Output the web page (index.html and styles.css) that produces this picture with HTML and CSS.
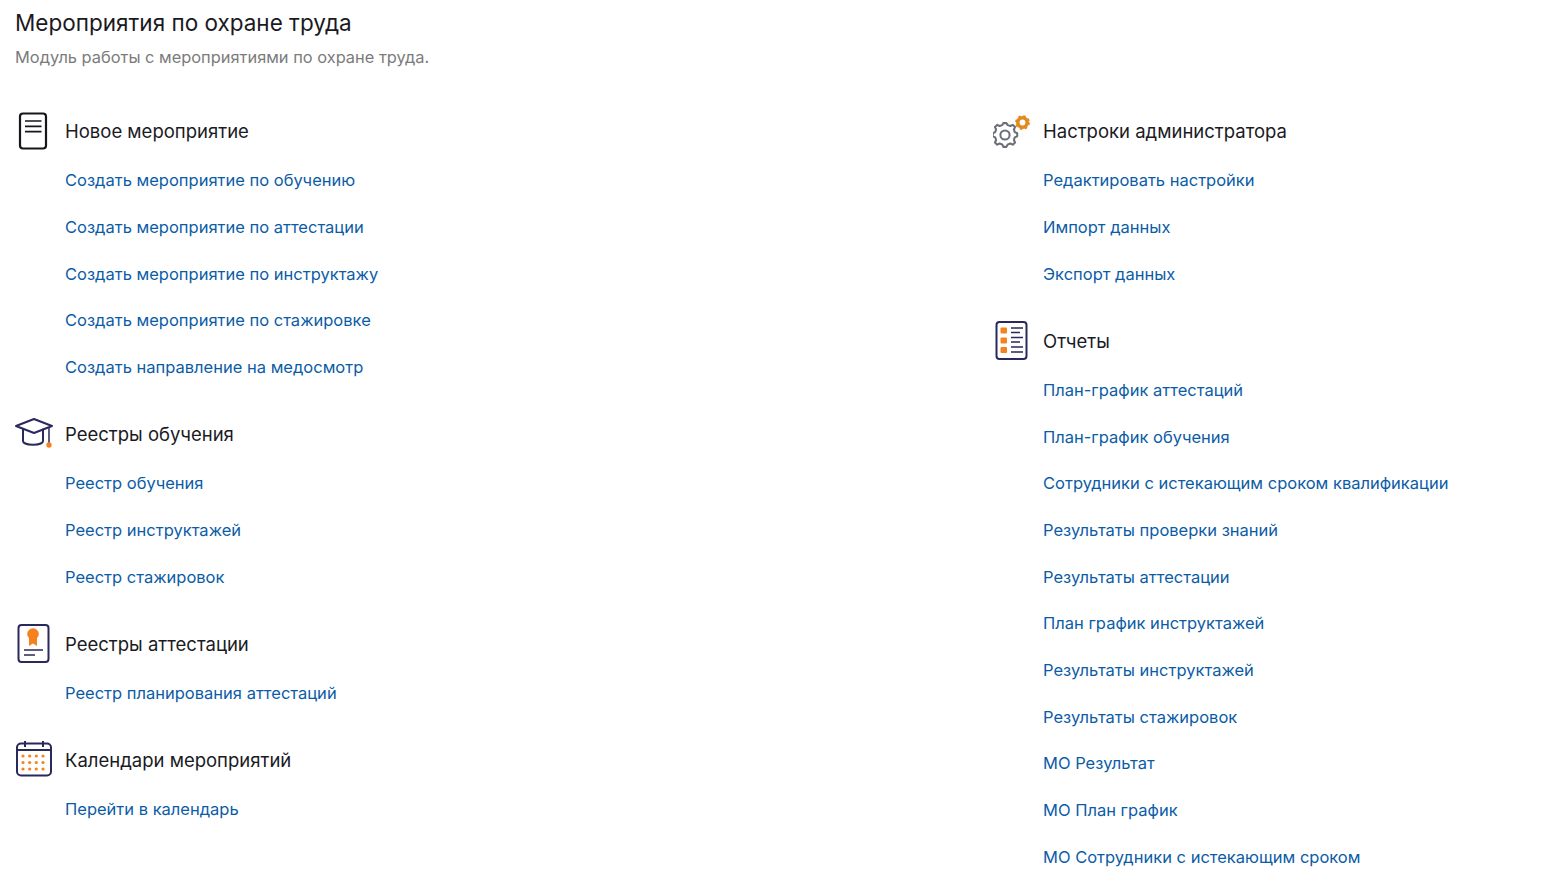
FILE: index.html
```html
<!DOCTYPE html>
<html>
  <head>
    <title>Мероприятия по охране труда</title>

    <link rel="stylesheet" href="styles.css">
  </head>
  <body>
    <h1>Мероприятия по охране труда</h1>
    <p class="subtitle">Модуль работы с мероприятиями по охране труда.</p>

    <div class="columns">
      <div>
        <section class="group">
          <div class="group-head">
            <svg class="icon" viewBox="0 0 40 40" fill="none" stroke="#16161d" stroke-width="2.200">
              <rect x="5" y="2.500" width="26" height="35" rx="3"/>
              <path d="M10 10H26.500M10 15.300H26.500M10 20.600H26.500" stroke-width="1.700"/>
            </svg>
            <h2>Новое мероприятие</h2>
          </div>
          <a href="#">Создать мероприятие по обучению</a>
          <a href="#">Создать мероприятие по аттестации</a>
          <a href="#">Создать мероприятие по инструктажу</a>
          <a href="#">Создать мероприятие по стажировке</a>
          <a href="#">Создать направление на медосмотр</a>
        </section>

        <section class="group">
          <div class="group-head">
            <svg class="icon" viewBox="0 0 40 40" fill="none" stroke="#29295c" stroke-width="2">
              <path d="M1 12L19 5L37 12L19 19Z" stroke-linejoin="round"/>
              <path d="M8 15.500V27C8 32 28 32 28 27V15.500" stroke-linecap="round"/>
              <path d="M34 13V29" stroke-width="1.500"/>
              <circle cx="34" cy="31" r="2.700" fill="#f5821f" stroke="none"/>
            </svg>
            <h2>Реестры обучения</h2>
          </div>
          <a href="#">Реестр обучения</a>
          <a href="#">Реестр инструктажей</a>
          <a href="#">Реестр стажировок</a>
        </section>

        <section class="group">
          <div class="group-head">
            <svg class="icon" viewBox="0 0 40 40" fill="none" stroke="#29295c" stroke-width="2">
              <rect x="3.500" y="1" width="30" height="37" rx="3"/>
              <path d="M14 13V22L18 19.500L22 22V13Z" fill="#f5821f" stroke="none"/>
              <circle cx="18" cy="10" r="5.800" fill="#f5821f" stroke="none"/>
              <path d="M9 26H28M9 31H20" stroke-width="1.700"/>
            </svg>
            <h2>Реестры аттестации</h2>
          </div>
          <a href="#">Реестр планирования аттестаций</a>
        </section>

        <section class="group">
          <div class="group-head">
            <svg class="icon" viewBox="0 0 40 40" fill="none" stroke="#29295c" stroke-width="2">
              <rect x="2" y="3.500" width="34" height="32" rx="4"/>
              <path d="M2 10H36M10 1V7M28 1V7"/>
              <g fill="#f5821f" stroke="none">
                <circle cx="8" cy="16" r="1.600"/><circle cx="14.700" cy="16" r="1.600"/><circle cx="21.300" cy="16" r="1.600"/><circle cx="28" cy="16" r="1.600"/>
                <circle cx="8" cy="22.500" r="1.600"/><circle cx="14.700" cy="22.500" r="1.600"/><circle cx="21.300" cy="22.500" r="1.600"/><circle cx="28" cy="22.500" r="1.600"/>
                <circle cx="8" cy="29" r="1.600"/><circle cx="14.700" cy="29" r="1.600"/><circle cx="21.300" cy="29" r="1.600"/><circle cx="28" cy="29" r="1.600"/>
              </g>
            </svg>
            <h2>Календари мероприятий</h2>
          </div>
          <a href="#">Перейти в календарь</a>
        </section>
      </div>

      <div>
        <section class="group">
          <div class="group-head">
            <svg class="icon" viewBox="0 0 40 40" fill="none">
              <path d="M12 13L15.500 13L17 15.300L20 16.300L22.800 15L25.300 17.500L24 20.300L25 23.300L27.800 24.500V28L25 29.200L24 32.200L25.300 35L22.800 37.500L20 36.200L17 37.200L15.500 40H12L10.800 37.200L7.800 36.200L5 37.500L2.500 35L3.800 32.200L2.800 29.200L0 28V24.500L2.800 23.300L3.800 20.300L2.500 17.500L5 15L7.800 16.300L10.800 15.300Z" transform="translate(12 24) scale(.88) translate(-13.900 -26.500)" stroke="#6b6e76" stroke-width="2.300" stroke-linejoin="round"/>
              <circle cx="12" cy="24" r="4.600" stroke="#6b6e76" stroke-width="2"/>
              <circle cx="29.500" cy="11.500" r="4.700" stroke="#e38a1f" stroke-width="3.600"/>
              <circle cx="29.500" cy="11.500" r="6.500" stroke="#e38a1f" stroke-width="1.800" stroke-dasharray="2.500 2.600"/>
            </svg>
            <h2>Настроки администратора</h2>
          </div>
          <a href="#">Редактировать настройки</a>
          <a href="#">Импорт данных</a>
          <a href="#">Экспорт данных</a>
        </section>

        <section class="group">
          <div class="group-head">
            <svg class="icon" viewBox="0 0 40 40" fill="none" stroke="#29295c" stroke-width="2">
              <rect x="3.500" y="1" width="30" height="37" rx="3"/>
              <g fill="#f5821f" stroke="none">
                <rect x="7.500" y="6.500" width="6.500" height="6" rx="1"/>
                <rect x="7.500" y="16.500" width="6.500" height="6" rx="1"/>
                <rect x="7.500" y="26" width="6.500" height="6" rx="1"/>
              </g>
              <path d="M18 7H30M18 11.500H27M18 16.500H30M18 21H27M18 26H30M18 31H30" stroke-width="1.600"/>
            </svg>
            <h2>Отчеты</h2>
          </div>
          <a href="#">План-график аттестаций</a>
          <a href="#">План-график обучения</a>
          <a href="#">Сотрудники с истекающим сроком квалификации</a>
          <a href="#">Результаты проверки знаний</a>
          <a href="#">Результаты аттестации</a>
          <a href="#">План график инструктажей</a>
          <a href="#">Результаты инструктажей</a>
          <a href="#">Результаты стажировок</a>
          <a href="#">МО Результат</a>
          <a href="#">МО План график</a>
          <a href="#">МО Сотрудники с истекающим сроком</a>
        </section>
      </div>
    </div>
  </body>
</html>
```

FILE: styles.css
```css
body,
h1,
h2,
p {
  margin: 0;
  padding: 0;
}

/* Body styling */
body {
  background: #fff;
  color: #1a1a1f;
  padding: 0 15px;
  font-family: "Inter", sans-serif;
  height: 888px;
  box-sizing: border-box;
  overflow: hidden;
}

/* Page header */
h1 {
  font-size: 22.500px;
  font-weight: 400;
  line-height: 32px;
  padding-top: 7px;
}

.subtitle {
  font-size: 16.400px;
  line-height: 22px;
  color: #7b7b7b;
  margin-top: 7px;
}

/* Two columns of link groups */
.columns {
  display: grid;
  grid-template-columns: 978px 1fr;
  margin-top: 43px;
}

.group {
  margin-bottom: 23.500px;
}

.group-head {
  display: flex;
  align-items: center;
  height: 40px;
  margin-bottom: 6px;
}

.icon {
  width: 40px;
  height: 40px;
  margin-right: 10px;
  flex-shrink: 0;
}

h2 {
  font-size: 18.500px;
  font-weight: 400;
}

.group a {
  display: flex;
  align-items: center;
  height: 46.700px;
  padding-left: 50px;
  font-size: 16.500px;
  color: #0b5ca6;
  text-decoration: none;
}
```
